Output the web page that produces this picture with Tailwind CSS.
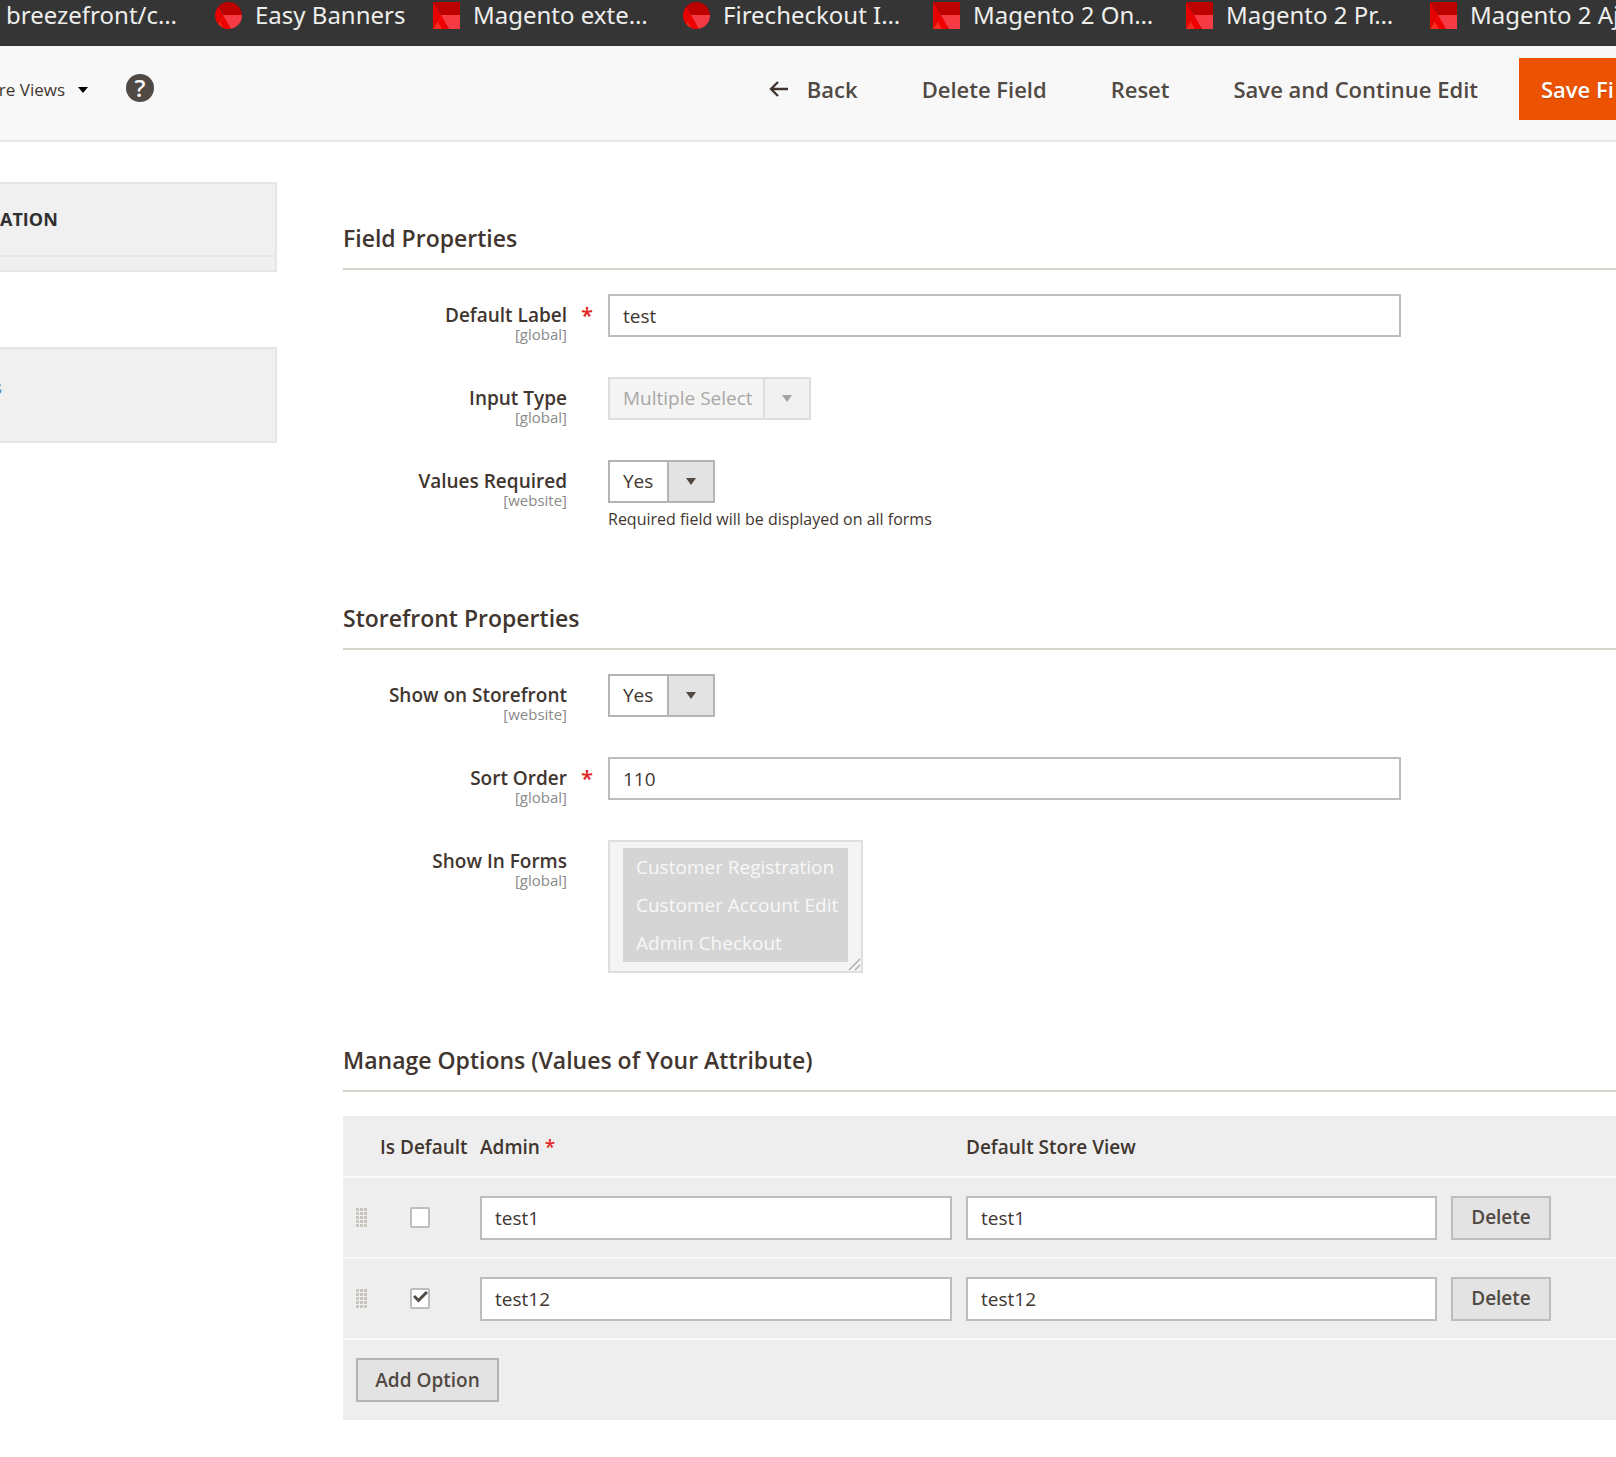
<!DOCTYPE html>
<html lang="en">
<head>
    <meta charset="UTF-8">
    <meta name="viewport" content="width=device-width, initial-scale=1.0">
    <title>Field Properties</title>
    <script src="https://cdn.jsdelivr.net/npm/@tailwindcss/browser@4"></script>
</head>
<body class="bg-white font-['Open_Sans','Noto_Sans',sans-serif] text-[19px] text-[#41362f] overflow-x-hidden">

    <!-- Facet icons used in the bookmarks -->
    <svg class="hidden">
        <symbol id="facets" viewBox="0 0 27 27">
            <path fill="#bd0000" d="M0 0h27v13H9z"/>
            <path fill="#e60000" d="M0 0l9 13.500L0 27z"/>
            <path fill="#f92a1c" d="M9 13l6.500 14H0z"/>
            <path fill="#ee0000" d="M9 13l7 14H9L5 20z"/>
            <path fill="#f53a44" d="M8 13h19v14H16z"/>
        </symbol>
    </svg>

    <!-- Bookmarks bar -->
    <nav class="h-[46px] bg-[#353535] text-[#eeeeec] font-['Noto_Sans',sans-serif] text-[24px] leading-[29px] flex gap-[27px] pl-[6px] overflow-hidden whitespace-nowrap">
        <a href="#" class="w-[182px] shrink-0">breezefront/c…</a>
        <a href="#" class="w-[191px] shrink-0 flex gap-[13px]"><svg class="w-[27px] h-[27px] mt-[2px] rounded-full"><use href="#facets"/></svg>Easy Banners</a>
        <a href="#" class="w-[223px] shrink-0 flex gap-[13px]"><svg class="w-[27px] h-[27px] mt-[2px]"><use href="#facets"/></svg>Magento exte…</a>
        <a href="#" class="w-[223px] shrink-0 flex gap-[13px]"><svg class="w-[27px] h-[27px] mt-[2px] rounded-full"><use href="#facets"/></svg>Firecheckout I…</a>
        <a href="#" class="w-[226px] shrink-0 flex gap-[13px]"><svg class="w-[27px] h-[27px] mt-[2px]"><use href="#facets"/></svg>Magento 2 On…</a>
        <a href="#" class="w-[217px] shrink-0 flex gap-[13px]"><svg class="w-[27px] h-[27px] mt-[2px]"><use href="#facets"/></svg>Magento 2 Pr…</a>
        <a href="#" class="shrink-0 flex gap-[13px]"><svg class="w-[27px] h-[27px] mt-[2px]"><use href="#facets"/></svg>Magento 2 Aj</a>
    </nav>

    <!-- Page actions -->
    <header class="h-24 bg-[#f8f8f8] border-b-2 border-[#e6e6e6] flex justify-between items-start">
        <div class="flex items-center pt-6">
            <button type="button" class="flex items-center pt-1 text-[17px] leading-8">
                <span class="w-[65px] overflow-hidden flex justify-end whitespace-nowrap">ore Views</span>
                <svg class="w-[10px] h-[6px] ml-[13px]" viewBox="0 0 10 6"><path d="M0 0h10L5 6z" fill="#000"/></svg>
            </button>
            <a href="#" aria-label="Help" class="ml-[38px] w-[28px] h-[28px] rounded-full bg-[#514943] text-[#f8f8f8] text-[24px] leading-[28px] font-semibold text-center">?</a>
        </div>
        <div class="flex items-center pt-3 text-[22px] leading-[62px] font-semibold text-[#514943] whitespace-nowrap">
            <button type="button" class="flex items-center gap-[18px]">
                <svg class="w-5 h-4" viewBox="0 0 20 16" fill="none" stroke="#41362f" stroke-width="2.400"><path d="M19 8H2M9 1L2 8l7 7"/></svg>
                Back
            </button>
            <button type="button" class="ml-16">Delete Field</button>
            <button type="button" class="ml-16">Reset</button>
            <button type="button" class="ml-16">Save and Continue Edit</button>
            <button type="button" class="ml-[41px] w-[97px] overflow-hidden bg-[#eb5202] text-white text-left pl-[22px] text-shadow-xs">Save Fi</button>
        </div>
    </header>

    <div class="flex">

        <!-- Side tabs -->
        <aside class="w-[277px] shrink-0 pt-10">
            <div class="h-[90px] bg-[#f0f0f0] border-2 border-l-0 border-[#e6e6e6]">
                <div class="h-[73px] border-b-2 border-[#e6e6e6] text-[18px] leading-[71px] font-bold text-[#303030]">
                    <span class="block w-14">ATION</span>
                </div>
            </div>
            <div class="h-24 mt-[75px] bg-[#f0f0f0] border-2 border-l-0 border-[#e6e6e6] text-[18px] leading-[76px]">
                <a href="#" class="w-[2px] overflow-hidden flex justify-end text-[#5f87ad]">s</a>
            </div>
        </aside>

        <main class="flex-1 min-w-0 ml-[66px] pt-[82px] text-[#41362f]">

            <section>
                <h2 class="text-[23px] leading-7 font-semibold pb-4 border-b-2 border-[#d8d3c8]">Field Properties</h2>
                <div class="grid grid-cols-[224px_1fr] gap-x-[41px] gap-y-[34px] pt-6 items-start">
                    <label for="label" class="relative pt-[11px] text-right leading-5 font-semibold">
                        Default Label
                        <span class="block text-[15px] leading-[18px] font-normal text-[#8a8a8a]">[global]</span>
                        <span class="absolute -right-[26px] top-2 text-[22px] leading-6 text-[#e22626]">*</span>
                    </label>
                    <input id="label" type="text" value="test" class="w-full max-w-[793px] h-[43px] border-2 border-[#bdbdbd] px-[13px]">

                    <label for="type" class="pt-[11px] text-right leading-5 font-semibold">
                        Input Type
                        <span class="block text-[15px] leading-[18px] font-normal text-[#8a8a8a]">[global]</span>
                    </label>
                    <div class="relative w-[203px]">
                        <select id="type" disabled class="appearance-none block w-full h-[43px] border-2 border-[#dedede] bg-[#f4f4f4] pl-[13px] text-[#a9a6a4] opacity-100">
                            <option>Multiple Select</option>
                        </select>
                        <span class="absolute right-[2px] top-[2px] w-[46px] h-[39px] border-l-2 border-[#dedede] bg-[#f1f1f1] flex items-center justify-center pointer-events-none">
                            <svg class="w-[10px] h-[7px]" viewBox="0 0 10 7"><path d="M0 0h10L5 7z" fill="#a5a19e"/></svg>
                        </span>
                    </div>

                    <label for="required" class="pt-[11px] text-right leading-5 font-semibold">
                        Values Required
                        <span class="block text-[15px] leading-[18px] font-normal text-[#8a8a8a]">[website]</span>
                    </label>
                    <div>
                        <div class="relative w-[107px]">
                            <select id="required" class="appearance-none block w-full h-[43px] border-2 border-[#b4b4b4] bg-white pl-[13px]">
                                <option>Yes</option>
                            </select>
                            <span class="absolute right-[2px] top-[2px] w-[46px] h-[39px] border-l-2 border-[#b4b4b4] bg-[#e3e3e3] flex items-center justify-center pointer-events-none">
                                <svg class="w-[10px] h-[7px]" viewBox="0 0 10 7"><path d="M0 0h10L5 7z" fill="#514943"/></svg>
                            </span>
                        </div>
                        <p class="mt-1 text-[16px] leading-6">Required field will be displayed on all forms</p>
                    </div>
                </div>
            </section>

            <section class="mt-[73px]">
                <h2 class="text-[23px] leading-7 font-semibold pb-4 border-b-2 border-[#d8d3c8]">Storefront Properties</h2>
                <div class="grid grid-cols-[224px_1fr] gap-x-[41px] gap-y-[34px] pt-6 items-start">
                    <label for="storefront" class="pt-[11px] text-right leading-5 font-semibold">
                        Show on Storefront
                        <span class="block text-[15px] leading-[18px] font-normal text-[#8a8a8a]">[website]</span>
                    </label>
                    <div class="relative w-[107px]">
                        <select id="storefront" class="appearance-none block w-full h-[43px] border-2 border-[#b4b4b4] bg-white pl-[13px]">
                            <option>Yes</option>
                        </select>
                        <span class="absolute right-[2px] top-[2px] w-[46px] h-[39px] border-l-2 border-[#b4b4b4] bg-[#e3e3e3] flex items-center justify-center pointer-events-none">
                            <svg class="w-[10px] h-[7px]" viewBox="0 0 10 7"><path d="M0 0h10L5 7z" fill="#514943"/></svg>
                        </span>
                    </div>

                    <label for="sort" class="relative pt-[11px] text-right leading-5 font-semibold">
                        Sort Order
                        <span class="block text-[15px] leading-[18px] font-normal text-[#8a8a8a]">[global]</span>
                        <span class="absolute -right-[26px] top-2 text-[22px] leading-6 text-[#e22626]">*</span>
                    </label>
                    <input id="sort" type="text" value="110" class="w-full max-w-[793px] h-[43px] border-2 border-[#bdbdbd] px-[13px]">

                    <label for="forms" class="pt-[11px] text-right leading-5 font-semibold">
                        Show In Forms
                        <span class="block text-[15px] leading-[18px] font-normal text-[#8a8a8a]">[global]</span>
                    </label>
                    <div class="relative w-[255px]">
                        <select id="forms" multiple disabled class="block overflow-hidden w-full h-[133px] border-2 border-[#dedede] bg-[#f4f4f4] px-[13px] py-[6px] opacity-100">
                            <option selected class="h-[38px] px-[13px] pt-[6px] bg-[#d5d5d5] checked:bg-[linear-gradient(#d5d5d5,#d5d5d5)] text-[#f8f8f8]">Customer Registration</option>
                            <option selected class="h-[38px] px-[13px] pt-[6px] bg-[#d5d5d5] checked:bg-[linear-gradient(#d5d5d5,#d5d5d5)] text-[#f8f8f8]">Customer Account Edit</option>
                            <option selected class="h-[38px] px-[13px] pt-[6px] bg-[#d5d5d5] checked:bg-[linear-gradient(#d5d5d5,#d5d5d5)] text-[#f8f8f8]">Admin Checkout</option>
                        </select>
                        <svg class="absolute right-[2px] bottom-[2px] w-[13px] h-[13px]" viewBox="0 0 13 13" stroke="#a8a8a8" stroke-width="1.300"><path d="M1 12L12 1M7 12l5-5"/></svg>
                    </div>
                </div>
            </section>

            <section class="mt-[73px]">
                <h2 class="text-[23px] leading-7 font-semibold pb-4 border-b-2 border-[#d8d3c8]">Manage Options (Values of Your Attribute)</h2>
                <table class="mt-6 w-full table-fixed bg-[#eeeeee] border-collapse">
                    <colgroup>
                        <col class="w-[30px]">
                        <col class="w-[100px]">
                        <col class="w-[486px]">
                        <col class="w-[485px]">
                        <col>
                    </colgroup>
                    <thead>
                        <tr class="h-[61px] border-b-2 border-[#fbfbfb] text-left whitespace-nowrap">
                            <th></th>
                            <th class="px-[7px] pt-[2px] font-semibold">Is Default</th>
                            <th class="px-[7px] pt-[2px] font-semibold">Admin <span class="text-[#e22626]">*</span></th>
                            <th class="px-[7px] pt-[2px] font-semibold">Default Store View</th>
                            <th></th>
                        </tr>
                    </thead>
                    <tbody>
                        <tr class="h-[81px] border-b-2 border-[#f9f9f9]">
                            <td class="pl-[13px]">
                                <svg class="w-[11px] h-5" viewBox="0 0 11 20" stroke="#c9c5be" stroke-width="3" stroke-dasharray="3 1"><path d="M1.500 0v19M5.500 0v19M9.500 0v19"/></svg>
                            </td>
                            <td class="pl-[37px]">
                                <input type="checkbox" aria-label="Is Default test1" class="appearance-none block w-5 h-[21px] border-2 border-[#bdbdbd] rounded-[2px] bg-white">
                            </td>
                            <td class="px-[7px]"><input type="text" aria-label="Admin" value="test1" class="block w-full h-11 border-2 border-[#bdbdbd] bg-white px-[13px]"></td>
                            <td class="px-[7px]"><input type="text" aria-label="Default Store View" value="test1" class="block w-full h-11 border-2 border-[#bdbdbd] bg-white px-[13px]"></td>
                            <td class="px-[7px]"><button type="button" class="block w-[100px] h-11 border-2 border-[#bdbdbd] bg-[#e3e3e3] font-semibold text-[#514943]">Delete</button></td>
                        </tr>
                        <tr class="h-[81px] border-b-2 border-[#f9f9f9]">
                            <td class="pl-[13px]">
                                <svg class="w-[11px] h-5" viewBox="0 0 11 20" stroke="#c9c5be" stroke-width="3" stroke-dasharray="3 1"><path d="M1.500 0v19M5.500 0v19M9.500 0v19"/></svg>
                            </td>
                            <td class="pl-[37px]">
                                <div class="relative w-5">
                                    <input type="checkbox" checked aria-label="Is Default test12" class="appearance-none block w-5 h-[21px] border-2 border-[#bdbdbd] rounded-[2px] bg-white">
                                    <svg class="absolute left-[3px] top-[3px] w-[15px] h-3 pointer-events-none" viewBox="0 0 15 12" fill="none" stroke="#514943" stroke-width="3"><path d="M1 5l4.500 4.500L14 1"/></svg>
                                </div>
                            </td>
                            <td class="px-[7px]"><input type="text" aria-label="Admin" value="test12" class="block w-full h-11 border-2 border-[#bdbdbd] bg-white px-[13px]"></td>
                            <td class="px-[7px]"><input type="text" aria-label="Default Store View" value="test12" class="block w-full h-11 border-2 border-[#bdbdbd] bg-white px-[13px]"></td>
                            <td class="px-[7px]"><button type="button" class="block w-[100px] h-11 border-2 border-[#bdbdbd] bg-[#e3e3e3] font-semibold text-[#514943]">Delete</button></td>
                        </tr>
                    </tbody>
                    <tfoot>
                        <tr class="h-[81px]">
                            <td colspan="5" class="pl-[13px]"><button type="button" class="block w-[143px] h-11 border-2 border-[#b4b4b4] bg-[#e3e3e3] font-semibold text-[#514943]">Add Option</button></td>
                        </tr>
                    </tfoot>
                </table>
            </section>

        </main>
    </div>

</body>
</html>
